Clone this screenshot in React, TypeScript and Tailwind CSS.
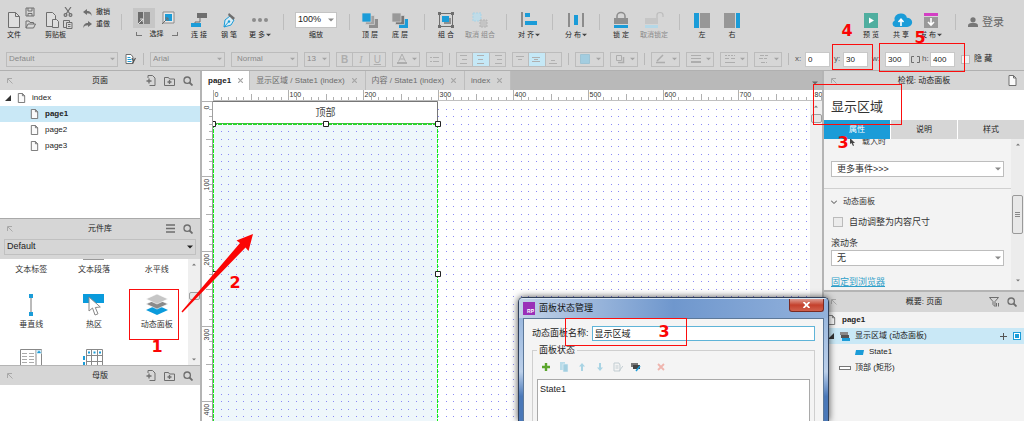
import { useState } from 'react';
import type { ReactNode } from 'react';
import clsx from 'clsx';

const GRAY = '#8c8c8c';
const DARK = '#6e6e6e';
const BLUE = '#1b9cd8';
const PALE = '#a9d3e6';

/* ---------- small shared icons ---------- */

function PageIcon({ className = 'w-[9px] h-[11px]' }: { className?: string }) {
  return (
    <svg viewBox="0 0 9 11" className={className} fill="#fafafa" stroke={DARK} strokeWidth="1">
      <path d="M1 .5h4.500L8 3v7.500H1z" />
      <path d="M5.500 .5V3H8" fill="none" />
    </svg>
  );
}

function SearchIcon() {
  return (
    <svg viewBox="0 0 10 10" className="w-[10px] h-[10px]" fill="none" stroke={DARK} strokeWidth="1.300">
      <circle cx="4.200" cy="4.200" r="3.200" />
      <path d="M6.500 6.500l3 3" strokeWidth="1.800" />
    </svg>
  );
}

function AddPageIcon() {
  return (
    <svg viewBox="0 0 10 11" className="w-[10px] h-[11px]" fill="none" stroke={DARK} strokeWidth="1">
      <path d="M2 3V.5h4.500L9 3v7.500H3.500" />
      <path d="M.5 6h5M3 3.500v5" strokeWidth="1.300" />
    </svg>
  );
}

function AddFolderIcon() {
  return (
    <svg viewBox="0 0 11 10" className="w-[11px] h-[10px]" fill="none" stroke={DARK} strokeWidth="1">
      <path d="M.5 9.500v-8h4l1 1.500h5v6.500z" />
      <path d="M3.500 6h4M5.500 4v4" strokeWidth="1.300" />
    </svg>
  );
}

function MenuIcon() {
  return (
    <svg viewBox="0 0 9 9" className="w-[9px] h-[9px]" stroke={DARK} strokeWidth="1.300">
      <path d="M0 1h9M0 4.500h9M0 8h9" />
    </svg>
  );
}

function CornerArrow() {
  return (
    <svg viewBox="0 0 6 6" className="w-[6px] h-[6px] shrink-0" fill="none" stroke="#a8a8a8" strokeWidth="1">
      <path d="M.5 5V.5H5M1 1l4.500 4.500" />
    </svg>
  );
}

function Caret({ className = 'w-[6px] h-[4px] text-[#8a8a8a]' }: { className?: string }) {
  return (
    <svg viewBox="0 0 6 4" className={className} fill="currentColor">
      <path d="M0 .5h6L3 3.500z" />
    </svg>
  );
}

/* ---------- top toolbar ---------- */

const ICONS: Record<string, ReactNode> = {
  connect: (
    <>
      <path d="M6 1h10v5H6z" fill={DARK} />
      <path d="M9 6v4H4v2" fill="none" stroke={DARK} />
      <path d="M0 11h10v4H0z" fill={BLUE} />
    </>
  ),
  pen: (
    <>
      <path d="M3 15l1-7 5-4 4 4-3 5z" fill="#d9edf6" stroke={BLUE} />
      <path d="M3 15l4.500-5" stroke={BLUE} />
      <circle cx="8" cy="9.500" r="1.200" fill={BLUE} />
      <path d="M8 1l6 5-2 2-5-5z" fill={DARK} />
    </>
  ),
  more: (
    <g fill={GRAY}>
      <circle cx="2" cy="8" r="2" />
      <circle cx="8" cy="8" r="2" />
      <circle cx="14" cy="8" r="2" />
    </g>
  ),
  front: (
    <>
      <path d="M7 7h9v9H7z" fill="#8f8f8f" />
      <path d="M3.500 3.500h9v9h-9z" fill="#a2a2a2" stroke="#d6d6d6" strokeWidth=".7" />
      <path d="M0 1h9v9H0z" fill={BLUE} stroke="#d6d6d6" strokeWidth=".7" />
    </>
  ),
  back: (
    <>
      <path d="M7 7h9v9H7z" fill={BLUE} />
      <path d="M3.500 3.500h9v9h-9z" fill="#777" stroke="#d6d6d6" strokeWidth=".7" />
      <path d="M0 1h9v9H0z" fill="#999" stroke="#d6d6d6" strokeWidth=".7" />
    </>
  ),
  group: (
    <>
      <path d="M1.500 1.500h13v13h-13z" fill="none" stroke={DARK} />
      <path d="M0 0h3v3H0zM13 0h3v3h-3zM0 13h3v3H0zM13 13h3v3h-3z" fill={DARK} />
      <path d="M6 6h7v6H6z" fill="#8f8f8f" />
      <path d="M4 4h7v6H4z" fill={BLUE} />
    </>
  ),
  ungroup: (
    <>
      <path d="M1 1h8v8H1z" fill="#c0dce8" stroke={PALE} strokeDasharray="2 1" />
      <path d="M8 8h7v7H8z" fill="#c4c4c4" stroke="#b4b4b4" strokeDasharray="2 1" />
    </>
  ),
  align: (
    <>
      <path d="M0 0h2v15H0z" fill={GRAY} />
      <path d="M4 1h5v4H4zM4 9h12v4H4z" fill={BLUE} />
    </>
  ),
  distribute: (
    <>
      <path d="M0 1h2v14H0zM14 1h2v14h-2z" fill={GRAY} />
      <path d="M6 3h4v10H6z" fill={BLUE} />
    </>
  ),
  lock: (
    <>
      <path d="M4 6V4a4 3.500 0 0 1 8 0v2" fill="none" stroke={GRAY} strokeWidth="1.500" />
      <path d="M1 6h14v6H1z" fill="#8f8f8f" />
      <path d="M1 13h14v3H1z" fill={BLUE} />
    </>
  ),
  unlock: (
    <>
      <path d="M11 6V3a3 2.500 0 0 1 6 0v2" fill="none" stroke="#bdbdbd" strokeWidth="1.200" />
      <path d="M-1 6h13v6H-1z" fill="#c6c6c6" />
      <path d="M-1 13h13v3H-1z" fill="#b5d8e7" />
    </>
  ),
  left: (
    <>
      <path d="M0 1h5v15H0z" fill={BLUE} />
      <path d="M6 1h10v15H6z" fill="#979797" />
    </>
  ),
  right: (
    <>
      <path d="M0 1h11v15H0z" fill="#979797" />
      <path d="M12 1h4v15h-4z" fill={BLUE} />
    </>
  ),
  preview: (
    <>
      <path d="M1 1h14v15H1z" fill="#4fae9f" />
      <path d="M6 5.500l5 3-5 3z" fill="#fff" />
    </>
  ),
  share: (
    <>
      <path
        d="M3 15a3.500 3.500 0 0 1-.6-6.500A5.500 5.500 0 0 1 8 1.500a5 5 0 0 1 5.300 4.300A4.600 4.600 0 0 1 13.500 15z"
        fill={BLUE}
        transform="translate(-1 0) scale(1.120 1)"
      />
      <path d="M8 14V8M5.500 10L8 7.300l2.500 2.700" fill="none" stroke="#fff" strokeWidth="1.600" />
    </>
  ),
  publish: (
    <>
      <path d="M1 1h14v3H1z" fill="#d33fc4" />
      <path d="M1 5h14v11H1z" fill="#999" />
      <path d="M8 6v7M5 10l3 3 3-3" fill="none" stroke="#fff" strokeWidth="1.600" />
    </>
  ),
};

interface ToolProps {
  icon: string;
  label: string;
  width?: string;
  muted?: boolean;
  menu?: boolean;
}

function Tool({ icon, label, width = 'w-[30px]', muted, menu }: ToolProps) {
  return (
    <button className={clsx('flex flex-col items-center shrink-0', width)}>
      <svg viewBox="0 0 16 16" className="w-4 h-4 overflow-visible">{ICONS[icon]}</svg>
      <span
        className={clsx(
          'mt-px flex items-center gap-px text-[7px] leading-[12px] whitespace-nowrap',
          muted ? 'text-[#8a8a8a]' : 'text-[#222]'
        )}
      >
        {label}
        {menu && <Caret className="w-[5px] h-[4px] text-[#444]" />}
      </span>
    </button>
  );
}

function Sep({ className }: { className?: string }) {
  return <div className={clsx('w-px h-4 mt-0.5 bg-[#bdbdbd] shrink-0', className)} />;
}

function MainToolbar() {
  return (
    <div className="flex items-start h-12 pt-3 pl-[7px] pr-5">
      <div className="w-[38px] -mt-[5px] shrink-0">
        <div className="flex gap-1">
          <svg viewBox="0 0 14 18" className="w-[14px] h-[18px] mt-1 shrink-0" fill="#dedede" stroke={DARK}>
            <path d="M1.500 1.500h7l4 4v11h-11z" />
            <path d="M8.500 1.500v4h4" fill="none" />
          </svg>
          <div className="flex flex-col gap-[3px]">
            <svg viewBox="0 0 10 10" className="w-[10px] h-[10px]" fill="none" stroke={DARK}>
              <path d="M1 1h8v8H1zM3 1v3h4V1M3 9V6.500h4V9" />
            </svg>
            <svg viewBox="0 0 11 9" className="w-[11px] h-[9px]" fill="none" stroke={DARK}>
              <path d="M1 8V1h3l1 1.500h3.500V4M1 8l2-4h7.500L8.500 8z" />
            </svg>
          </div>
        </div>
        <div className="text-[7px] leading-[12px] text-[#222]">文件</div>
      </div>
      <div className="w-[38px] -mt-[5px] shrink-0">
        <div className="flex gap-1">
          <svg viewBox="0 0 14 18" className="w-[14px] h-[18px] mt-1 shrink-0" fill="#dedede" stroke={DARK}>
            <path d="M1.500 1.500h6l3 3v11h-9z" />
            <path d="M7.500 8.500h4l2 2v6h-6z" />
          </svg>
          <div className="flex flex-col gap-[3px]">
            <svg viewBox="0 0 10 10" className="w-[10px] h-[10px]" fill="none" stroke={DARK} strokeWidth="1.200">
              <path d="M2 0l5 7M8 0L3 7" />
              <circle cx="2.500" cy="8" r="1.400" />
              <circle cx="7.500" cy="8" r="1.400" />
            </svg>
            <svg viewBox="0 0 10 9" className="w-[10px] h-[9px]" fill="none" stroke={DARK}>
              <path d="M3.500 7.500h-3v-7h6v2M3.500 2.500h5.500v6H3.500zM5 4.500h2.500M5 6.500h2.500" />
            </svg>
          </div>
        </div>
        <div className="text-[7px] leading-[12px] text-[#222]">剪贴板</div>
      </div>
      <div className="-mt-1.5 shrink-0">
        <button className="flex items-center gap-1 text-[7px] leading-[12px] text-[#222]">
          <svg viewBox="0 0 9 7" className="w-[9px] h-[7px]" fill={DARK}>
            <path d="M0 3l4-3v2c3 0 5 2 4.500 5C8 5 6.500 4.300 4 4.300V6z" />
          </svg>
          撤销
        </button>
        <button className="flex items-center gap-1 text-[7px] leading-[12px] text-[#222]">
          <svg viewBox="0 0 9 7" className="w-[9px] h-[7px]" fill={DARK}>
            <path d="M9 3L5 0v2C2 2 0 4 .5 7 1 5 2.500 4.300 5 4.300V6z" />
          </svg>
          重做
        </button>
      </div>
      <Sep className="ml-[11px]" />
      <div className="ml-[11px] -mt-1 w-[47px] shrink-0">
        <div className="flex items-center gap-[6px]">
          <button aria-label="相交选中" className="flex items-center justify-center w-[22px] h-5 bg-[#c6c6c6]">
            <svg viewBox="0 0 14 14" className="w-[14px] h-[14px]">
              <path d="M1 1h5v12H1z" fill="#6b6b6b" />
              <path d="M7 1h6v12H7z" fill="#858585" />
              <path d="M1 13l5-5M3 8h3v3" fill="none" stroke="#ddd" />
            </svg>
          </button>
          <button aria-label="包含选中">
            <svg viewBox="0 0 14 14" className="w-[14px] h-[14px]">
              <path d="M2 1h11v11H2z" fill="#e8e8e8" stroke={GRAY} />
              <path d="M4 3h7v7H4z" fill={BLUE} />
              <path d="M1 13l6-6M4 7h3v3" fill="none" stroke={DARK} />
            </svg>
          </button>
        </div>
        <div className="flex items-center justify-center gap-2 text-[7px] leading-[12px] text-[#222]">
          <span className="w-[6px] h-[4px] border-l border-b border-[#777]" />
          选择
          <span className="w-[6px] h-[4px] border-r border-b border-[#777]" />
        </div>
      </div>
      <div className="flex ml-1 shrink-0">
        <Tool icon="connect" label="连 接" />
        <Tool icon="pen" label="钢 笔" />
        <Tool icon="more" label="更 多" width="w-[32px]" menu />
      </div>
      <Sep className="ml-[7px]" />
      <div className="ml-[11px] w-[42px] shrink-0 text-center">
        <Select label="缩放" value="100%" className="h-4 bg-white border-[#c4c4c4] text-[9px] text-[#222]" />
        <div className="mt-px text-[7px] leading-[12px] text-[#222]">缩放</div>
      </div>
      <Sep className="ml-3" />
      <div className="flex ml-[5px] shrink-0">
        <Tool icon="front" label="顶 层" />
        <Tool icon="back" label="底 层" />
      </div>
      <Sep className="ml-[9px]" />
      <div className="flex ml-[6px] shrink-0">
        <Tool icon="group" label="组 合" />
        <Tool icon="ungroup" label="取消 组合" width="w-[38px]" muted />
      </div>
      <Sep className="ml-[7px]" />
      <div className="flex ml-[7px] shrink-0">
        <Tool icon="align" label="对 齐" menu />
      </div>
      <Sep className="ml-2" />
      <div className="flex ml-2 shrink-0">
        <Tool icon="distribute" label="分 布" menu />
      </div>
      <Sep className="ml-2" />
      <div className="flex ml-[6px] shrink-0">
        <Tool icon="lock" label="锁 定" />
        <Tool icon="unlock" label="取消锁定" width="w-[36px]" muted />
      </div>
      <Sep className="ml-[7px]" />
      <div className="flex ml-[7px] shrink-0">
        <Tool icon="left" label="左" />
        <Tool icon="right" label="右" />
      </div>
      <div className="flex ml-auto shrink-0">
        <Tool icon="preview" label="预 览" />
        <Tool icon="share" label="共 享" />
        <Tool icon="publish" label="发 布" menu />
      </div>
      <Sep className="ml-[9px]" />
      <button className="flex items-center gap-1 ml-3 mt-0.5 text-[11px] leading-[16px] text-[#666] shrink-0">
        <svg viewBox="0 0 10 10" className="w-[10px] h-[10px]" fill="#777">
          <circle cx="5" cy="2.800" r="2.600" />
          <path d="M0 10V8.500C0 6.500 2 6 5 6s5 .5 5 2.500V10z" />
        </svg>
        登录
      </button>
    </div>
  );
}

/* ---------- form bits ---------- */

interface SelectProps {
  label: string;
  value: string;
  className?: string;
  caret?: string;
}

function Select({ label, value, className, caret }: SelectProps) {
  return (
    <div className={clsx('relative flex items-center border shrink-0', className)}>
      <select aria-label={label} className="w-full h-full pl-[2px] appearance-none outline-none bg-transparent">
        <option>{value}</option>
      </select>
      <span className="absolute right-[2px] inset-y-0 flex items-center pointer-events-none">
        <Caret className={caret} />
      </span>
    </div>
  );
}

function Dropper({ width, label, children }: { width: string; label: string; children: ReactNode }) {
  return (
    <button
      aria-label={label}
      className={clsx('flex items-center justify-between h-[15px] pl-1 pr-[2px] border border-[#bcbcbc] shrink-0', width)}
    >
      <svg viewBox="0 0 10 10" className="w-[10px] h-[10px]" fill="none" stroke="#adadad">{children}</svg>
      <Caret className="w-[5px] h-[4px] text-[#a4a4a4]" />
    </button>
  );
}

const H_ALIGN = [
  'M0 .5h7M2 4.500h5M0 8.500h7',
  'M1 .5h7M2 4.500h5M1 8.500h7',
  'M2 .5h7M4 4.500h5M2 8.500h7',
];
const V_ALIGN = ['M0 1.500h8M2 4.500h4', 'M0 2.500h8M2 4.500h4M0 6.500h8', 'M2 5.500h4M0 8.500h8'];

function AlignGroup({ paths, name }: { paths: string[]; name: string }) {
  const [active, setActive] = useState(1);
  return (
    <div className="flex w-[50px] h-[15px] border border-[#bcbcbc] shrink-0">
      {paths.map((d, i) => (
        <button
          key={d}
          aria-label={`${name} ${i + 1}`}
          onClick={() => setActive(i)}
          className={clsx(
            'flex flex-1 items-center justify-center',
            i > 0 && 'border-l border-[#bcbcbc]',
            active === i && 'bg-[#c5e8f6]'
          )}
        >
          <svg viewBox="0 0 9 9" className="w-[9px] h-[9px]" stroke="#b0b0b0">
            <path d={d} />
          </svg>
        </button>
      ))}
    </div>
  );
}

function NumberField({ name, value, width }: { name: string; value: string; width: string }) {
  return (
    <label className="flex items-center shrink-0">
      <span className={clsx('text-[#555]', width)}>{name}</span>
      <input defaultValue={value} className="w-[25px] h-[15px] pl-[2px] bg-white border border-[#c8c8c8] text-[#222] outline-none" />
    </label>
  );
}

function StyleBar() {
  return (
    <div className="flex items-center gap-[6px] h-[22px] pl-[6px] overflow-hidden text-[8px] text-[#8a8a8a]">
      <Select label="样式" value="Default" className="w-[112px] h-[15px] border-[#bcbcbc]" caret="w-[5px] h-[4px] text-[#a4a4a4]" />
      <button aria-label="管理样式" className="flex justify-center w-[13px] shrink-0">
        <svg viewBox="0 0 11 10" className="w-[11px] h-[10px]" fill="none">
          <path d="M1 .5h5L8 3v6.500H1z" fill="#fff" stroke={DARK} />
          <path d="M2.500 3.500h3M2.500 5.500h4M2.500 7.500h4" stroke={BLUE} />
          <path d="M7 4l1.500 3M10.500 4L7.500 9.500" stroke="#555" strokeWidth="1.200" />
        </svg>
      </button>
      <div className="w-px h-3 bg-[#b8b8b8] shrink-0" />
      <Select label="字体" value="Arial" className="w-[75px] h-[15px] border-[#bcbcbc]" caret="w-[5px] h-[4px] text-[#a4a4a4]" />
      <Select label="字型" value="Normal" className="w-[67px] h-[15px] pl-[3px] border-[#bcbcbc]" caret="w-[5px] h-[4px] text-[#a4a4a4]" />
      <Select label="字号" value="13" className="w-[26px] h-[15px] border-[#bcbcbc]" caret="w-[5px] h-[4px] text-[#a4a4a4]" />
      <div className="flex w-[50px] h-[15px] border border-[#bcbcbc] text-[10px] leading-[13px] text-[#adadad] shrink-0">
        <button className="flex-1 font-bold">B</button>
        <button className="flex-1 border-l border-[#bcbcbc] italic font-['Liberation_Serif',serif]">I</button>
        <button className="flex-1 border-l border-[#bcbcbc] underline">U</button>
      </div>
      <Dropper width="w-[28px]" label="文本颜色">
        <path d="M1.500 7.500L5 0l3.500 7.500M3 5h4" />
        <path d="M0 9h10" strokeWidth="2" />
      </Dropper>
      <button aria-label="项目符号" className="flex items-center justify-center w-[17px] h-[15px] border border-[#bcbcbc] shrink-0">
        <svg viewBox="0 0 9 7" className="w-[9px] h-[7px]" stroke="#b0b0b0">
          <path d="M0 1.500h2M3 1.500h6M0 5.500h2M3 5.500h6" />
        </svg>
      </button>
      <div className="w-px h-3 bg-[#b8b8b8] shrink-0" />
      <AlignGroup paths={H_ALIGN} name="水平对齐" />
      <AlignGroup paths={V_ALIGN} name="垂直对齐" />
      <div className="w-px h-3 bg-[#b8b8b8] shrink-0" />
      <Dropper width="w-[29px]" label="填充颜色">
        <path d="M.5 .5h9v9h-9z" fill="#a3cde0" stroke="#9fc4d4" />
      </Dropper>
      <Dropper width="w-[28px]" label="外部阴影">
        <path d="M1.500 1.500h5v5h-5z" />
        <path d="M3 8.500h5.500V3" strokeWidth="1.500" />
      </Dropper>
      <div className="w-px h-3 bg-[#b8b8b8] shrink-0" />
      <Dropper width="w-[29px]" label="线段颜色">
        <path d="M1 7l6-6M0 8.500h9" strokeWidth="1.500" />
      </Dropper>
      <Dropper width="w-[28px]" label="线宽">
        <path d="M0 1.500h10M0 4.500h10" />
        <path d="M0 8h10" strokeWidth="2" />
      </Dropper>
      <Dropper width="w-[28px]" label="线段类型">
        <path d="M0 1.500h10" strokeDasharray="2 1" />
        <path d="M0 4.500h10" strokeDasharray="4 2" />
        <path d="M0 8.500h10" />
      </Dropper>
      <Dropper width="w-[28px]" label="箭头样式">
        <path d="M1 1.500h8M0 4.500h8M2 8.500h6" strokeDasharray="4 1" />
      </Dropper>
      <div className="w-px h-3 bg-[#b8b8b8] shrink-0" />
      <div className="flex items-center gap-1 shrink-0">
        <NumberField name="x:" value="0" width="w-[10px]" />
        <NumberField name="y:" value="30" width="w-[9px]" />
        <NumberField name="w:" value="300" width="w-[13px]" />
      </div>
      <div className="flex items-center gap-[2px] -ml-[5px] shrink-0">
        <svg viewBox="0 0 9 7" className="w-[9px] h-[7px]" fill="none" stroke={DARK}>
          <path d="M3 .5H.5v6H3M6 .5h2.500v6H6" />
        </svg>
        <NumberField name="h:" value="400" width="w-[8px]" />
      </div>
      <label className="flex items-center gap-1 text-[8px] text-[#222] whitespace-nowrap shrink-0">
        <input type="checkbox" className="appearance-none w-[9px] h-[9px] bg-[#f2f2f2] border border-[#bbb]" />
        隐 藏
      </label>
    </div>
  );
}

/* ---------- left column ---------- */

function PanelHeader({ title, children, className }: { title: string; children?: ReactNode; className?: string }) {
  return (
    <div className={clsx('flex items-center h-5 pl-[7px] pr-[7px] bg-[#d6d6d6] shrink-0', className)}>
      <div className="flex-1"><CornerArrow /></div>
      <h2 className="text-[8px] text-[#222]">{title}</h2>
      <div className="flex flex-1 items-center justify-end gap-2">{children}</div>
    </div>
  );
}

function Triangle() {
  return (
    <svg viewBox="0 0 6 6" className="w-[6px] h-[6px] shrink-0" fill="#333">
      <path d="M6 0v6H0z" />
    </svg>
  );
}

function PagesPanel() {
  return (
    <section className="flex flex-col h-[147px] shrink-0">
      <PanelHeader title="页面" className="!h-[19px]">
        <AddPageIcon />
        <AddFolderIcon />
        <SearchIcon />
      </PanelHeader>
      <ul className="text-[8px] text-[#222]">
        <li className="flex items-center h-4 pl-[5px]">
          <Triangle />
          <PageIcon className="w-[9px] h-[10px] ml-[6px] mr-[6px]" />
          index
        </li>
        {['page1', 'page2', 'page3'].map((page) => (
          <li
            key={page}
            className={clsx('flex items-center gap-[6px] h-4 pl-[30px]', page === 'page1' && 'bg-[#c9e8f6] font-bold')}
          >
            <PageIcon className="w-[9px] h-[10px]" />
            {page}
          </li>
        ))}
      </ul>
    </section>
  );
}

const WIDGETS: { label: string; icon: ReactNode }[] = [
  {
    label: '垂直线',
    icon: (
      <>
        <path d="M11 2v18" stroke="#777" />
        <path d="M9 0h4v4H9zM9 18h4v4H9z" fill={BLUE} />
      </>
    ),
  },
  {
    label: '热区',
    icon: (
      <>
        <path d="M0 0h21v9H0z" fill="#0a9bdc" />
        <path d="M6 3v14l3.500-3 2.500 7 3-1.200-2.700-6.300 5-.5z" fill="#fff" stroke="#888" />
      </>
    ),
  },
  {
    label: '动态面板',
    icon: (
      <>
        <path d="M11 11l11 5-11 5-11-5z" fill="#0a9bdc" />
        <path d="M11 5l11 5-11 5-11-5z" fill="#8a8a8a" stroke="#fff" strokeWidth=".6" />
        <path d="M11 0l11 5-11 5L0 5z" fill="#c6c6c6" stroke="#fff" strokeWidth=".6" />
      </>
    ),
  },
];

function ScrollRail({ className, thumb }: { className?: string; thumb: string }) {
  return (
    <div className={clsx('flex flex-col items-center justify-between py-1 bg-[#efefef] shrink-0', className)}>
      <Caret className="w-[4px] h-[3px] text-[#777] rotate-180" />
      <div className={clsx('border border-[#9f9f9f] rounded-[2px] bg-[#e6e6e6]', thumb)} />
      <Caret className="w-[4px] h-[3px] text-[#777] mt-auto" />
    </div>
  );
}

function LibraryPanel() {
  return (
    <section className="shrink-0">
      <PanelHeader title="元件库" className="border-t border-[#a9a9a9]">
        <MenuIcon />
        <SearchIcon />
      </PanelHeader>
      <div className="h-[21px] px-1 pt-px bg-[#d6d6d6]">
        <Select
          label="元件库"
          value="Default"
          className="h-4 border-[#c0c0c0] text-[9px] text-[#222]"
          caret="w-[6px] h-[4px] text-[#222]"
        />
      </div>
      <div className="flex h-[106px] bg-white">
        <div className="grid grid-cols-3 flex-1 content-start overflow-hidden text-[8px] leading-[12px] text-center text-[#333]">
          <div className="pt-[5px]">文本标签</div>
          <div className="relative pt-[5px]">
            <span className="absolute top-0 left-[20px] w-[21px] h-px bg-[#999]" />
            文本段落
          </div>
          <div className="pt-[5px]">水平线</div>
          {WIDGETS.map((w) => (
            <div key={w.label} className="flex flex-col items-center pt-[18px]">
              <svg viewBox="0 0 22 22" className="w-[22px] h-[22px]" fill="none">{w.icon}</svg>
              <span className="mt-[3px]">{w.label}</span>
            </div>
          ))}
          <div className="flex justify-center pt-[18px]">
            <svg viewBox="0 0 22 22" className="w-[22px] h-[22px]" fill="none" stroke="#888">
              <path d="M.5 .5h21v22H.5zM16 .5v22" />
              <path d="M2 4.500h5M9 4.500h5M2 7.500h5M9 7.500h5M2 10.500h5M9 10.500h5M2 13.500h5M9 13.500h5" stroke="#aaa" />
              <path d="M16.500 1h5v4h-5z" fill="#cfeaf7" stroke="none" />
              <path d="M17 4l2-2.500L21 4z" fill={BLUE} stroke="none" />
            </svg>
          </div>
          <div className="flex justify-center pt-[18px]">
            <svg viewBox="0 0 22 22" className="w-[22px] h-[22px] overflow-visible" fill="none" stroke="#888">
              <path d="M3.500 .5h16v22h-16zM8.500 .5v22M14.500 .5v22M3.500 6.500h16M3.500 12.500h16" />
              <path d="M5 3.500h2M10.500 3.500h2M16 3.500h2M1 7v4M1 13v3" stroke={BLUE} strokeWidth="2" />
            </svg>
          </div>
        </div>
        <ScrollRail className="w-3" thumb="w-[11px] h-2 mt-[26px]" />
      </div>
    </section>
  );
}

function MastersPanel() {
  return (
    <section className="flex-1 bg-white">
      <PanelHeader title="母版" className="border-t border-[#b4b4b4]">
        <AddPageIcon />
        <AddFolderIcon />
        <SearchIcon />
      </PanelHeader>
    </section>
  );
}

/* ---------- canvas ---------- */

const TABS = ['page1', '显示区域 / State1 (index)', '内容 / State1 (index)', 'index'];
// 100 document units take 75 screen pixels at this zoom
const STEP = 7.5;
const RANGE = Array.from({ length: 260 }, (_, i) => i);
const tickAt = (i: number) => Math.round(i * STEP) + 0.5;
const tickSize = (i: number) => (i % 10 === 0 ? 11 : i % 5 === 0 ? 7 : 4);
const TOP_LABELS = [0, 100, 200, 300, 400, 500, 600, 700, 800];
const SIDE_LABELS = [0, 100, 200, 300, 400];

function TopRuler() {
  return (
    <svg className="w-full h-[11px] bg-white shrink-0" fontSize="7" fill="#333">
      <path d={RANGE.map((i) => `M${tickAt(i) + 11} 11v-${tickSize(i)}`).join('')} stroke="#b0b0b0" />
      <path d="M11 10.500h3000" stroke="#c0c0c0" />
      {TOP_LABELS.map((n) => (
        <text key={n} x={tickAt(n / 10) + 12} y="7">{n}</text>
      ))}
    </svg>
  );
}

function SideRuler() {
  return (
    <svg className="w-[11px] h-full bg-white shrink-0" fontSize="7" fill="#333">
      <path d={RANGE.map((i) => `M11 ${tickAt(i)}h-${tickSize(i)}`).join('')} stroke="#b0b0b0" />
      <path d="M10.500 0v3000" stroke="#a0a0a0" />
      {SIDE_LABELS.map((n) => (
        <text key={n} transform={`translate(7 ${tickAt(n / 10) + (n === 0 ? 8 : 14)}) rotate(-90)`}>{n}</text>
      ))}
    </svg>
  );
}

const DOTS = RANGE.slice(1, 130)
  .flatMap((y) => RANGE.slice(1, 240).map((x) => `M${Math.round(x * STEP)} ${Math.round(y * STEP)}h1`))
  .join('');

function Stage() {
  return (
    <div className="relative flex-1 min-w-0 bg-white overflow-hidden">
      <svg className="absolute inset-0 w-full h-full" fill="none">
        <path d="M0 23h225v300H0z" fill="#eef7fb" />
        <path d={DOTS} stroke="#8a8af6" transform="translate(0 .5)" />
        <path d="M-.5 .5h225v22H-.5z" fill="#fff" stroke="#777" />
        <path d="M.5 23v300M224.500 23v300" stroke="#14f014" strokeDasharray="4 1" />
        <path d="M0 23h225" stroke="#2bd42b" strokeWidth="2" strokeDasharray="4 1" />
        <g fill="#fff" stroke="#222">
          <path d="M-2.500 20.500h5v5h-5zM110.500 20.500h5v5h-5zM222.500 20.500h5v5h-5z" />
          <path d="M-2.500 170.500h5v5h-5zM222.500 170.500h5v5h-5z" />
        </g>
      </svg>
      <div className="relative w-[225px] text-center text-[10px] leading-[24px] text-[#444]">顶部</div>
    </div>
  );
}

function Workspace() {
  const [current, setCurrent] = useState('page1');
  return (
    <main className="flex flex-col flex-1 min-w-0">
      <div className="flex h-[19px] bg-[#b9b9b9] text-[8px] shrink-0">
        {TABS.map((tab) => (
          <button
            key={tab}
            onClick={() => setCurrent(tab)}
            className={clsx(
              'flex items-center gap-[7px] pl-[6px] border-r border-[#bdbdbd] whitespace-nowrap',
              tab === 'page1' ? 'pr-[6px]' : 'pr-2',
              current === tab ? 'bg-white font-bold text-[#222]' : 'bg-[#d4d4d4] text-[#6c6c6c]'
            )}
          >
            {tab}
            <svg viewBox="0 0 5 5" className="w-[5px] h-[5px]" stroke="#a6a6a6" strokeWidth="1.200">
              <path d="M0 0l5 5M5 0L0 5" />
            </svg>
          </button>
        ))}
        <button aria-label="标签列表" className="ml-auto mr-1 mt-1"><Caret className="w-[6px] h-[4px] text-[#666]" /></button>
      </div>
      <TopRuler />
      <div className="flex flex-1 min-h-0">
        <SideRuler />
        <Stage />
        <ScrollRail className="w-3" thumb="w-[11px] h-[9px] mt-[6px]" />
      </div>
    </main>
  );
}

/* ---------- right column ---------- */

function Inspector() {
  const [tab, setTab] = useState('属性');
  return (
    <section className="shrink-0">
      <PanelHeader title="检视: 动态面板" className="!h-[19px]">
        <PageIcon className="w-[9px] h-[11px]" />
      </PanelHeader>
      <input
        aria-label="名称"
        defaultValue="显示区域"
        className="block w-full h-[30px] pl-[7px] bg-white text-[13px] text-[#333] outline-none"
      />
      <div className="flex gap-px h-[19px] bg-white text-[8px]">
        {['属性', '说明', '样式'].map((t) => (
          <button
            key={t}
            onClick={() => setTab(t)}
            className={clsx('flex-1', tab === t ? 'bg-[#1b9cd8] text-white' : 'bg-[#d6d6d6] text-[#222]')}
          >
            {t}
          </button>
        ))}
      </div>
      <div className="flex h-[151px] bg-[#f3f3f3] overflow-hidden">
        <div className="flex-1 text-[9px] leading-[12px] text-[#333]">
          <div className="flex items-center gap-[7px] -mt-[3px] pl-[26px] text-[8px] leading-[12px]">
            <svg viewBox="0 0 5 8" className="w-[5px] h-[8px]" fill="#444">
              <path d="M0 0v6l1.500-1L3 8l1-.5L3 5h2z" />
            </svg>
            载入时
          </div>
          <Select label="更多事件" value="更多事件>>>" className="h-4 mt-[13px] ml-[7px] mr-[7px] pl-[3px] bg-white border-[#bdbdbd]" />
          <hr className="mt-[11px] border-[#d0d0d0]" />
          <div className="flex items-center gap-[6px] mt-[7px] pl-[7px] text-[8px] leading-[12px]">
            <svg viewBox="0 0 6 4" className="w-[6px] h-[4px]" fill="none" stroke="#444">
              <path d="M0 .5l3 3 3-3" />
            </svg>
            动态面板
          </div>
          <label className="flex items-center gap-[6px] mt-2 pl-[9px]">
            <input type="checkbox" className="appearance-none w-[10px] h-[10px] bg-[#ececec] border border-[#bbb]" />
            自动调整为内容尺寸
          </label>
          <div className="mt-[9px] pl-[7px]">滚动条</div>
          <Select label="滚动条" value="无" className="h-4 mt-px ml-[7px] mr-[7px] pl-[3px] bg-white border-[#bdbdbd]" />
          <a href="#pin" className="block w-fit mt-[10px] ml-[7px] text-[#2f9fc9] underline">固定到浏览器</a>
        </div>
        <div className="flex flex-col items-center w-[13px] py-1 bg-[#ececec] shrink-0">
          <Caret className="w-[4px] h-[3px] text-[#777] rotate-180" />
          <div className="flex items-center justify-center w-[11px] h-[39px] mt-[49px] border border-[#999] rounded-[2px] bg-[#e8e8e8]">
            <svg viewBox="0 0 5 5" className="w-[5px] h-[5px]" stroke="#888">
              <path d="M0 .5h5M0 2.500h5M0 4.500h5" />
            </svg>
          </div>
          <Caret className="w-[4px] h-[3px] text-[#777] mt-auto mb-1" />
        </div>
      </div>
    </section>
  );
}

function Outline() {
  return (
    <section className="flex-1 bg-[#f3f3f3]">
      <PanelHeader title="概要: 页面" className="border-t-2 border-[#b4b4b4] !h-[22px]">
        <svg viewBox="0 0 10 10" className="w-[10px] h-[10px]" fill="none" stroke={DARK}>
          <path d="M.5 .5h9l-3.500 4v5L4 7.500v-3zM7.500 9.500V6M9.500 9.500V6" />
        </svg>
        <SearchIcon />
      </PanelHeader>
      <ul className="text-[8px] text-[#222]">
        <li className="flex items-center gap-[6px] h-4 pl-[3px] font-bold">
          <PageIcon className="w-[9px] h-[10px]" />
          page1
        </li>
        <li className="flex items-center h-4 pl-[4px] pr-[3px] bg-[#c9e8f6]">
          <Triangle />
          <svg viewBox="0 0 10 9" className="w-[10px] h-[9px] ml-[6px] mr-[5px]">
            <path d="M0 0h8v3H0z" fill="#8a8a8a" />
            <path d="M1 3h8v3H1z" fill="#555" />
            <path d="M2 6h8v3H2z" fill={BLUE} />
          </svg>
          显示区域 (动态面板)
          <svg viewBox="0 0 7 7" className="w-[7px] h-[7px] ml-auto mr-[6px]" stroke="#555">
            <path d="M0 3.500h7M3.500 0v7" />
          </svg>
          <span className="flex w-[8px] h-[8px] border border-[#1b9cd8] p-px bg-white"><span className="flex-1 bg-[#1b9cd8]" /></span>
        </li>
        <li className="flex items-center gap-[5px] h-4 pl-[31px]">
          <svg viewBox="0 0 9 5" className="w-[9px] h-[5px]">
            <path d="M1 0h8L8 5H0z" fill={BLUE} />
          </svg>
          State1
        </li>
        <li className="flex items-center gap-1 h-4 pl-[15px]">
          <span className="w-3 h-1 border border-[#777] bg-white" />
          顶部 (矩形)
        </li>
      </ul>
    </section>
  );
}

/* ---------- dialog ---------- */

function StateDialog() {
  return (
    <div
      role="dialog"
      aria-label="面板状态管理"
      className="absolute top-[297px] right-[195px] bottom-0 flex flex-col w-[311px] overflow-hidden rounded-t-[5px] border border-b-0 border-[#30405a] bg-gradient-to-b from-[#8fb0da] via-[#bcd0ea] via-60% to-[#4a78b8] to-80% shadow-[0_0_7px_rgba(0,0,0,0.7)]"
    >
      <div className="flex items-start h-5 pl-1 pr-1 bg-gradient-to-r from-[#c3d3e8] via-[#6f97cd] to-[#93b2dc] border-t border-[#dbe7f5] shrink-0">
        <span className="flex items-end justify-end w-3 h-[13px] mt-[3px] pr-px bg-[#9a30b8] text-[5px] leading-[7px] font-bold text-white">RP</span>
        <h2 className="ml-1 mt-[2px] text-[9px] leading-[14px] text-[#111]">面板状态管理</h2>
        <button
          aria-label="关闭"
          className="flex items-center justify-center w-[35px] h-[13px] ml-auto rounded-b-[3px] border border-t-0 border-[#7a2a22] bg-gradient-to-b from-[#dc9c92] via-[#c4402c] to-[#d0604c]"
        >
          <svg viewBox="0 0 7 6" className="w-[7px] h-[6px]" stroke="#fff" strokeWidth="1.800">
            <path d="M.5 0l6 6M6.500 0l-6 6" />
          </svg>
        </button>
      </div>
      <div className="flex flex-col flex-1 min-h-0 mx-1 px-2 pt-[7px] border border-b-0 border-[#5c7899] bg-[#f4f4f4] text-[9px] text-[#222]">
        <label className="flex items-center gap-[3px] shrink-0">
          动态面板名称:
          <input defaultValue="显示区域" className="flex-1 min-w-0 h-[15px] pl-[2px] bg-white border border-[#5fb4d8] outline-none" />
        </label>
        <fieldset className="flex flex-col flex-1 min-h-0 mt-[3px] px-1 border border-b-0 border-[#cfcfcf]">
          <legend className="px-[2px] leading-[12px]">面板状态</legend>
          <div className="flex items-center gap-2 h-[22px] px-1 shrink-0">
            <button aria-label="添加">
              <svg viewBox="0 0 10 10" className="w-[10px] h-[10px]"><path d="M5 1v8M1 5h8" stroke="#5aa52c" strokeWidth="2.400" /></svg>
            </button>
            <button aria-label="复制">
              <svg viewBox="0 0 10 10" className="w-[10px] h-[10px]" fill="#b9dce9"><path d="M1 0h5v8H1z" /><path d="M4 2h5v8H4z" fill="#a3cfe0" stroke="#e8f4f9" strokeWidth=".6" /></svg>
            </button>
            <button aria-label="上移">
              <svg viewBox="0 0 10 10" className="w-[10px] h-[10px]" fill="#a9d4e4"><path d="M5 1l3 3.500H6V9H4V4.500H2z" /></svg>
            </button>
            <button aria-label="下移">
              <svg viewBox="0 0 10 10" className="w-[10px] h-[10px]" fill="#a9d4e4"><path d="M5 9l3-3.500H6V1H4v4.500H2z" /></svg>
            </button>
            <button aria-label="编辑状态">
              <svg viewBox="0 0 10 10" className="w-[10px] h-[10px]" fill="none" stroke="#c2cdd2"><path d="M1 1h5l1 2v6H1zM2.500 4h3M2.500 6h3M6 9l4-5" /></svg>
            </button>
            <button aria-label="编辑全部">
              <svg viewBox="0 0 10 10" className="w-[10px] h-[10px]"><path d="M0 1h7v4H0z" fill="#777" /><path d="M2 3h7v4H2z" fill="#444" /><path d="M5 9l4-5" stroke={BLUE} strokeWidth="1.500" /></svg>
            </button>
            <button aria-label="删除" className="ml-[7px]">
              <svg viewBox="0 0 10 10" className="w-[10px] h-[10px]"><path d="M2 2l6 6M8 2L2 8" stroke="#efb5ae" strokeWidth="1.800" /></svg>
            </button>
          </div>
          <ul className="flex-1 mt-px pl-[2px] pt-[2px] bg-white border border-b-0 border-[#a9a9a9] leading-[14px]">
            <li>State1</li>
          </ul>
        </fieldset>
      </div>
    </div>
  );
}

/* ---------- red tutorial marks ---------- */

const BOXES = [
  'left-[129px] top-[289px] w-[50px] h-[51px]',
  'right-[151px] top-[44px] w-[41px] h-[26px]',
  'right-[59px] top-[43px] w-[86px] h-[29px]',
  'right-[122px] top-[84px] w-[89px] h-[41px]',
  'right-[337px] top-[318px] w-[122px] h-[28px]',
];

const STEPS = [
  { n: 1, at: 'left-[151px] top-[338px]' },
  { n: 2, at: 'left-[229px] top-[274px]' },
  { n: 3, at: 'right-[175px] top-[134px]' },
  { n: 3, at: 'right-[354px] top-[323px]' },
  { n: 4, at: 'right-[171px] top-[22px]' },
  { n: 5, at: 'right-[98px] top-[29px]' },
];

function Annotations() {
  return (
    <div className="absolute inset-0 pointer-events-none">
      {BOXES.map((box) => (
        <div key={box} className={clsx('absolute border border-[#fb0d0d]', box)} />
      ))}
      <svg viewBox="0 0 76 82" className="absolute left-[180px] top-[232px] w-[76px] h-[82px]" fill="#fb0505">
        <path d="M1.500 79.500L60 11l-3.500-2.500L73 2l-4.500 17-3-3.500L2.500 80.500z" />
      </svg>
      {STEPS.map((s) => (
        <span
          key={s.at}
          className={clsx(
            "absolute w-[12px] text-center font-['DejaVu_Sans',sans-serif] font-bold text-[16px] leading-[18px] text-[#fb0505]",
            s.at
          )}
        >
          {s.n}
        </span>
      ))}
    </div>
  );
}

export default function App() {
  return (
    <div className="relative flex flex-col h-screen overflow-hidden bg-[#d6d6d6] font-['Liberation_Sans','Noto_Sans_CJK_SC',sans-serif]">
      <header className="border-b border-[#b0b0b0] shrink-0">
        <MainToolbar />
        <StyleBar />
      </header>
      <div className="flex flex-1 min-h-0">
        <aside className="flex flex-col w-[200px] bg-white overflow-hidden shrink-0">
          <PagesPanel />
          <LibraryPanel />
          <MastersPanel />
        </aside>
        <div className="w-0.5 bg-[#b4b4b4] shrink-0" />
        <Workspace />
        <div className="w-0.5 bg-[#b4b4b4] shrink-0" />
        <aside className="flex flex-col w-[200px] overflow-hidden shrink-0">
          <Inspector />
          <Outline />
        </aside>
      </div>
      <StateDialog />
      <Annotations />
    </div>
  );
}
